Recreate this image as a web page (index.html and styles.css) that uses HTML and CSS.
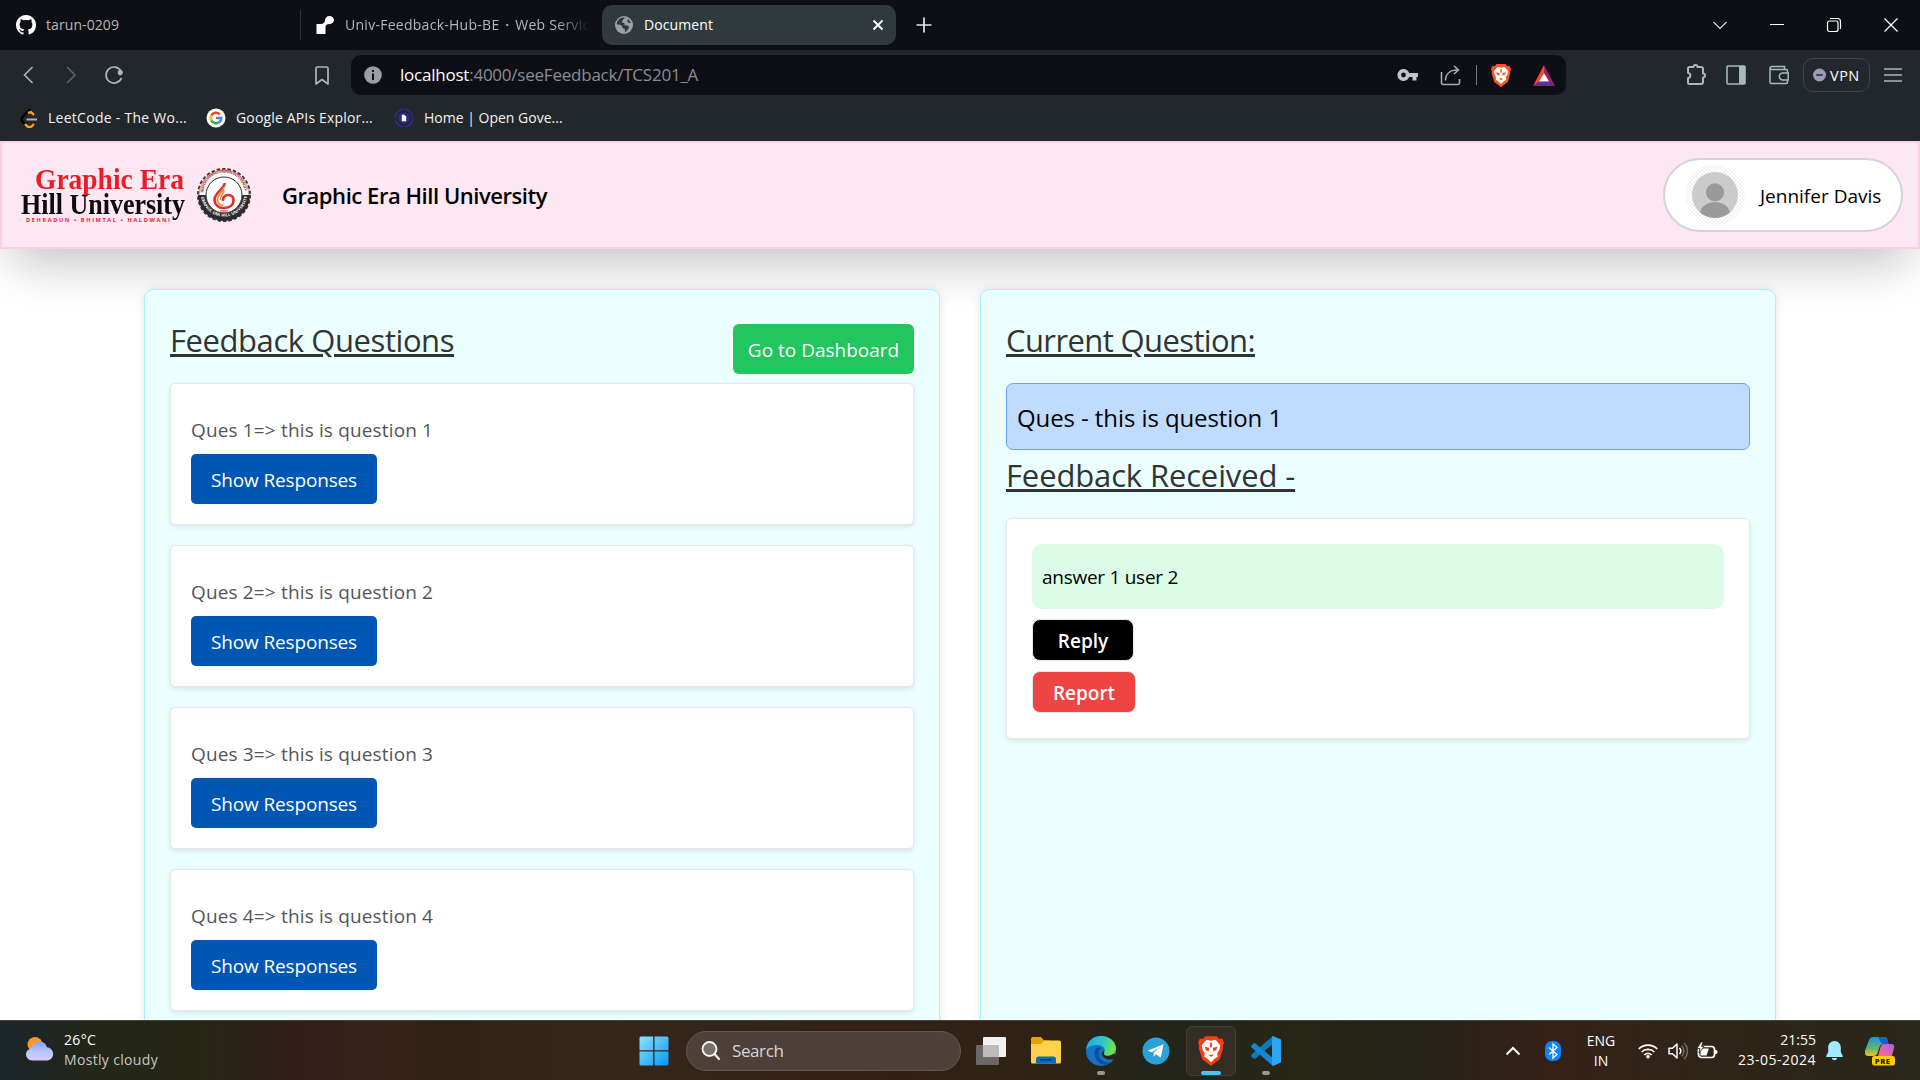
FILE: index.html
```html
<!DOCTYPE html>
<html lang="en">
<head>
<meta charset="utf-8">
<title>Document</title>
<link rel="stylesheet" href="styles.css">
</head>
<body>
<div class="screen">
  <div class="tabbar">
    <div class="tab tab-first">
      <svg class="ico" width="20" height="20" viewBox="0 0 16 16"><path fill="#fff" d="M8 0C3.58 0 0 3.58 0 8c0 3.54 2.29 6.53 5.47 7.59.4.07.55-.17.55-.38v-1.33c-2.23.48-2.7-1.07-2.7-1.07-.36-.92-.89-1.17-.89-1.17-.73-.5.05-.49.05-.49.81.06 1.23.83 1.23.83.72 1.23 1.88.87 2.34.67.07-.52.28-.87.5-1.07-1.77-.2-3.64-.89-3.64-3.95 0-.87.31-1.59.82-2.15-.08-.2-.36-1.02.08-2.12 0 0 .67-.21 2.2.82a7.7 7.7 0 0 1 4 0c1.53-1.04 2.2-.82 2.2-.82.44 1.1.16 1.92.08 2.12.51.56.82 1.27.82 2.15 0 3.07-1.87 3.75-3.65 3.95.29.25.54.73.54 1.48v2.2c0 .21.15.46.55.38A8 8 0 0 0 16 8c0-4.42-3.58-8-8-8z"/></svg>
      <span class="t tab-a">tarun-0209</span>
    </div>
    <div class="tab tab-second">
      <svg class="ico" width="20" height="20" viewBox="0 0 20 20"><path fill="#fff" d="M14.500 1c2.500 0 4.500 1.800 4.500 4s-2 4-4.500 4C12 9 10.500 10 10.500 12v7H1.500V9H6c2.300 0 4-1.500 4-3.500C10 2.800 12 1 14.500 1z"/></svg>
      <span class="t tab-b">Univ-Feedback-Hub-BE<span class="mid">・</span>Web Servic</span>
    </div>
    <div class="tab tab-active">
      <svg class="ico" width="18" height="18" viewBox="0 0 18 18"><circle cx="9" cy="9" r="9" fill="#9aa0a6"/><path fill="#30393e" d="M10 1.600 7.500 4.500l-.3 2.300 2 .3.500 2.200 2.800.2 1.800 1.500-2 3.500-2.500 1.800.2-3-2.200-1.300-1.800-3L1.700 8.200C2 4 5.500 1 10 1.600zM13 3l3 3.800-2.300.2-1.500-2z"/></svg>
      <span class="t tab-c">Document</span>
      <svg class="tab-close" width="12" height="12" viewBox="0 0 12 12"><path d="M1.500 1.500l9 9M10.500 1.500l-9 9" stroke="#fff" stroke-width="1.900"/></svg>
    </div>
    <svg class="newtab" width="16" height="16" viewBox="0 0 16 16"><path d="M8 .5v15M.5 8h15" stroke="#e8e8e8" stroke-width="1.700"/></svg>
    <div class="wincontrols">
      <svg width="16" height="16" viewBox="0 0 16 16"><path d="M1.500 5l6.500 6.500L14.500 5" fill="none" stroke="#ddd" stroke-width="1.200"/></svg>
      <svg width="16" height="16" viewBox="0 0 16 16"><path d="M1 7.500h14" stroke="#fff" stroke-width="1"/></svg>
      <svg width="16" height="16" viewBox="0 0 16 16"><rect x="1.500" y="4" width="10.500" height="10.500" rx="2" fill="none" stroke="#fff" stroke-width="1.200"/><path d="M4 1.500h7.500a3 3 0 0 1 3 3V12" fill="none" stroke="#fff" stroke-width="1.200"/></svg>
      <svg width="16" height="16" viewBox="0 0 16 16"><path d="M1.500 1.500l13 13M14.500 1.500l-13 13" stroke="#fff" stroke-width="1.200"/></svg>
    </div>
  </div>

  <div class="toolbar">
    <div class="nav">
      <svg width="20" height="20" viewBox="0 0 20 20"><path d="M13.500 2L5.500 10l8 8" fill="none" stroke="#a8b8c0" stroke-width="1.600"/></svg>
      <svg width="20" height="20" viewBox="0 0 20 20"><path d="M7 2l8 8-8 8" fill="none" stroke="#59646a" stroke-width="1.600"/></svg>
      <svg width="20" height="20" viewBox="0 0 20 20"><path d="M17 6A8 8 0 1 0 17.500 13" fill="none" stroke="#a8b8c0" stroke-width="1.700"/><path d="M19 7.500a2.600 2.600 0 1 0-1.500 2.500z" fill="#a8b8c0"/></svg>
      <svg class="bookmark" width="14" height="19" viewBox="0 0 14 19"><path d="M1 2.500Q1 1 2.500 1h9Q13 1 13 2.500V18l-6-4.500L1 18z" fill="none" stroke="#a8b8c0" stroke-width="1.700" stroke-linejoin="round"/></svg>
    </div>
    <div class="urlbar">
      <svg width="18" height="18" viewBox="0 0 18 18"><circle cx="9" cy="9" r="8.800" fill="#9b9ea5"/><path d="M8 4h2v2H8zM8 7.500h2V14H8z" fill="#0d0f14"/></svg>
      <span class="t url"><b>localhost</b>:4000/seeFeedback/TCS201_A</span>
      <div class="urlicons">
        <svg class="u1" width="22" height="14" viewBox="0 0 22 14"><path fill="#c3c4c7" fill-rule="evenodd" d="M6.500 1a6 6 0 0 1 5.600 4H21v4h-1.500v3.500h-4V9h-3.400A6 6 0 1 1 6.500 1zm0 3.600a2.400 2.400 0 1 0 0 4.800 2.400 2.400 0 0 0 0-4.800z"/></svg>
        <svg class="u2" width="21" height="21" viewBox="0 0 21 21"><path d="M1.500 7v10.500q0 2 2 2h14q2 0 2-2V14M5.500 15.500c0-6 4-10.500 12-10.500M14 1l4.500 4L14 9" fill="none" stroke="#a9abaf" stroke-width="1.600"/></svg>
        <i class="udiv"></i>
        <svg class="u3" width="20" height="23" viewBox="0 0 28 32"><path fill="#fb542b" d="M8 0h12l3 3 3-.5 2 4.500-1.200 3L27 13l-3.500 12L14 32 4.500 25 1 13l.2-3L0 7l2-4.500 3 .5z"/><path fill="#fff" d="M14 5l5-1 5 6-1 5-2.500 4 1 3-3.500 2-4 4-4-4-3.500-2 1-3L5 15l-1-5 5-6z"/><path fill="#fb542b" d="M7 11.500l5 1-.5 4-3-1.500zM21 11.500l-5 1 .5 4 3-1.500zM11 20h6l-3 2.500zM13 7h2v5h-2z"/></svg>
        <svg class="u4" width="22" height="21" viewBox="0 0 22 21"><path fill="#ff4724" d="M11 0v8L6 17l-6 4z"/><path fill="#9e1f63" d="M11 0l11 21-6-4-5-9z"/><path fill="#662d91" d="M0 21l6-4.500h10l6 4.500z"/><path fill="#fff" d="M11 8l5 8.500H6z"/></svg>
      </div>
    </div>
    <div class="tools">
      <svg width="22" height="22" viewBox="0 0 22 22"><path fill="none" stroke="#a8b8c0" stroke-width="2" stroke-linejoin="round" d="M3 4.500Q3 3 4.500 3h4a2 2 0 0 1 4 0H16q2 0 2 2v4.500a2 2 0 0 1 0 4V18q0 2-2 2H4.500Q3 20 3 18.500v-4.300q2.500-1 2.500-2.700T3 8.800z"/></svg>
      <svg width="20" height="20" viewBox="0 0 20 20"><rect x="1" y="1" width="18" height="18" rx="1" fill="none" stroke="#a8b8c0" stroke-width="1.600"/><path d="M13 1h6v18h-6z" fill="#a8b8c0"/></svg>
      <svg width="20" height="20" viewBox="0 0 20 20"><path fill="none" stroke="#a8b8c0" stroke-width="1.500" d="M18.500 8V6q0-1.500-1.500-1.500H1M1 2.500V17q0 1.500 1.500 1.500H17q1.500 0 1.500-1.500v-2M1 4.500q0-3 2-3h12.500v3M19.200 8h-5.500a3.400 3.400 0 0 0 0 6.900h5.500z"/></svg>
      <div class="vpn"><svg width="13" height="14" viewBox="0 0 14 14"><circle cx="7" cy="7" r="7" fill="#9d9bb8"/><path d="M3.500 7h7" stroke="#22272b" stroke-width="1.600"/></svg><span class="t vpnt">VPN</span></div>
      <svg class="burger" width="18" height="14" viewBox="0 0 18 14"><path d="M0 1h18M0 7h18M0 13h18" stroke="#a8b8c0" stroke-width="1.500"/></svg>
    </div>
  </div>

  <div class="bookmarks">
    <svg width="18" height="20" viewBox="0 0 18 20"><path d="M10.500.8L2.500 9q-2 2.300 0 4.600L5 16" fill="none" stroke="#000" stroke-width="2.500"/><path d="M8 5l3-1 3 3M5 16l2.500 2.500q2 1.200 4 0L14 16" fill="none" stroke="#ffa116" stroke-width="2.400"/><path d="M6.500 11.500H17" stroke="#b3b3b3" stroke-width="2"/></svg>
    <span class="t bm1">LeetCode - The Wo...</span>
    <svg class="b2" width="20" height="20" viewBox="0 0 20 20"><circle cx="10" cy="10" r="9.500" fill="#fff"/><g fill="none" stroke-width="2.600"><path d="M13.700 6.300A5.200 5.200 0 0 0 5.500 7.400" stroke="#ea4335"/><path d="M5.500 7.400a5.200 5.200 0 0 0 0 5.200" stroke="#fbbc05"/><path d="M5.500 12.600a5.200 5.200 0 0 0 7.800 1.500" stroke="#34a853"/><path d="M13.300 14.100A5 5 0 0 0 15.200 10H10" stroke="#4285f4"/></g></svg>
    <span class="t bm2">Google APIs Explor...</span>
    <svg class="b3" width="20" height="20" viewBox="0 0 20 20"><circle cx="10" cy="10" r="8.800" fill="none" stroke="#2f2c9c" stroke-width="1.400" stroke-dasharray="12 1.800"/><circle cx="10" cy="10" r="5.800" fill="#2b298c"/><path d="M7.800 6.800h2.600l1.800 1.800v4.600H7.800z" fill="#fff"/></svg>
    <span class="t bm3">Home | Open Gove...</span>
  </div>

  <div class="page">
    <header class="header">
      <div class="wordmark">
        <span class="t w1">Graphic Era</span>
        <span class="t w2">Hill University</span>
        <span class="t w3">DEHRADUN • BHIMTAL • HALDWANI</span>
      </div>
      <svg class="seal" width="56" height="56" viewBox="0 0 56 56">
        <circle cx="28" cy="28" r="25.500" fill="none" stroke="#3a3839" stroke-width="3" stroke-dasharray="3.400 1.940"/>
        <circle cx="28" cy="28" r="25.300" fill="#fff"/>
        <circle cx="28" cy="28" r="24.800" fill="none" stroke="#6b696a" stroke-width=".6"/>
        <path d="M2 28a26 26 0 0 0 52 0h-8a18 18 0 0 1-36 0z" fill="#2d2b2c"/>
        <circle cx="28" cy="28" r="18" fill="#fff" stroke="#2d2b2c" stroke-width="1"/>
        <path id="arcTop" d="M7.500 26a20.500 20.500 0 0 1 41 0" fill="none"/>
        <path id="arcBottom" d="M5 30a23.300 23.300 0 0 0 46 0" fill="none"/>
        <text class="arc arc-red"><textPath href="#arcTop" textLength="62">TRANSFORMING DREAMS INTO REALITY</textPath></text>
        <text class="arc arc-white"><textPath href="#arcBottom" textLength="66">GRAPHIC ERA HILL UNIVERSITY</textPath></text>
        <path fill="none" stroke="#d8332a" stroke-width="2.600" d="M28.500 16c1 5-10 9-10 17a8.500 8.500 0 0 0 9.500 8c6 0 9.500-3 9.500-8 0-3-2-5-5-5-4 0-6 3-5.500 6"/>
        <path fill="none" stroke="#ef8a3c" stroke-width="1.600" d="M28 20c-1 5-7 8-6.500 13.500.5 3 3 5 6 4.500M28 23c0 4-4 6-3.500 10"/>
        <path d="M24 44h8M26 46h4" stroke="#c9302a" stroke-width="1.200"/>
      </svg>
      <h1 class="t title">Graphic Era Hill University</h1>
      <div class="user">
        <svg width="60" height="60" viewBox="0 0 60 60">
          <defs><pattern id="check" width="4" height="4" patternUnits="userSpaceOnUse"><path d="M0 0h2v2H0zM2 2h2v2H2z" fill="#f2f2f2"/></pattern><clipPath id="face"><circle cx="30" cy="30" r="23"/></clipPath></defs>
          <circle cx="30" cy="30" r="30" fill="url(#check)"/><circle cx="30" cy="30" r="23" fill="#cbcbcb"/>
          <g clip-path="url(#face)" fill="#999"><circle cx="30" cy="27.300" r="9"/><ellipse cx="30" cy="49" rx="15" ry="12"/></g>
        </svg>
        <span class="t uname">Jennifer Davis</span>
      </div>
    </header>

    <main class="columns">
      <section class="panel">
        <div class="panel-head"><h2 class="t h-a">Feedback Questions</h2><button class="dash"><span class="t gd">Go to Dashboard</span></button></div>
        <div class="card"><p class="t q">Ques 1=&gt; this is question 1</p><button class="show"><span class="t sr">Show Responses</span></button></div>
        <div class="card"><p class="t q">Ques 2=&gt; this is question 2</p><button class="show"><span class="t sr">Show Responses</span></button></div>
        <div class="card"><p class="t q">Ques 3=&gt; this is question 3</p><button class="show"><span class="t sr">Show Responses</span></button></div>
        <div class="card"><p class="t q">Ques 4=&gt; this is question 4</p><button class="show"><span class="t sr">Show Responses</span></button></div>
      </section>
      <section class="panel">
        <div class="panel-head"><h2 class="t h-b">Current Question:</h2></div>
        <div class="current"><span class="t cq">Ques - this is question 1</span></div>
        <div class="received"><h2 class="t h-c">Feedback Received -</h2></div>
        <div class="answers">
          <div class="answer"><span class="t an">answer 1 user 2</span></div>
          <button class="act reply"><span class="t rp">Reply</span></button>
          <button class="act report"><span class="t rt">Report</span></button>
        </div>
      </section>
    </main>
  </div>

  <footer class="taskbar">
    <div class="weather">
      <svg width="28" height="24" viewBox="0 0 28 24"><defs><linearGradient id="cl" x1="0" y1="0" x2="0" y2="1"><stop offset="0" stop-color="#7fa8ff"/><stop offset=".55" stop-color="#b9c6fb"/><stop offset="1" stop-color="#dcc8ff"/></linearGradient></defs><circle cx="9" cy="7.500" r="7.500" fill="#fb9a26"/><path fill="url(#cl)" d="M6.500 23.500a6 6 0 0 1-1-12A8 8 0 0 1 21 10.200a6.700 6.700 0 0 1 .5 13.300z"/></svg>
      <div class="wtext"><span class="t temp">26°C</span><span class="t cond">Mostly cloudy</span></div>
    </div>
    <div class="apps">
      <svg width="30" height="30" viewBox="0 0 30 30"><defs><linearGradient id="win" x1="0" y1="0" x2="1" y2="1"><stop offset="0" stop-color="#8be4ff"/><stop offset="1" stop-color="#0795f5"/></linearGradient></defs><path fill="url(#win)" d="M2 .5h12.200v13.700H.5V2Q.5.5 2 .5zM15.500.5H28q1.500 0 1.500 1.500v12.200h-14zM.5 15.500h13.700v14H2q-1.500 0-1.500-1.500zM15.500 15.500h14V28q0 1.500-1.500 1.500H15.500z"/></svg>
      <div class="search"><svg width="20" height="20" viewBox="0 0 20 20"><circle cx="8.500" cy="8" r="7" fill="#77706d" stroke="#f4f4f4" stroke-width="1.900"/><path d="M13.500 13l4.500 5" stroke="#f4f4f4" stroke-width="2.200" stroke-linecap="round"/></svg><span class="t se">Search</span></div>
      <svg class="a1" width="30" height="28" viewBox="0 0 30 28"><rect x="7" y="0" width="23" height="20" rx="1" fill="#f1f1f1"/><rect x="0" y="8" width="23" height="20" rx="1" fill="#6b6867"/><rect x="7" y="8" width="16" height="12" fill="#bdbbbb"/></svg>
      <svg class="a2" width="30" height="27" viewBox="0 0 30 27"><path fill="#e8a200" d="M0 2q0-2 2-2h8l3 3.500h6V9H0z"/><path fill="#ffd04a" d="M0 7h10l3-3.500h15q2 0 2 2V25q0 1.500-1.500 1.500h-27Q0 26.500 0 25z"/><path fill="#0f6cbd" d="M5 26.500V22q0-2.500 2.500-2.500h15Q25 19.500 25 22v4.500z"/><path d="M9 22.800h12" stroke="#083c73" stroke-width="1.500"/></svg>
      <div class="app a3"><svg width="30" height="30" viewBox="0 0 30 30"><defs><linearGradient id="eg" x1="0" y1="0" x2="1" y2=".3"><stop offset="0" stop-color="#23a6e8"/><stop offset=".6" stop-color="#2cc8c9"/><stop offset="1" stop-color="#74e04b"/></linearGradient></defs><circle cx="15" cy="15" r="15" fill="#1473c4"/><path fill="url(#eg)" d="M0 14C1 5 7 0 15 0c9 0 15 6 15 12.500C30 17 26.500 20 22 20c-3 0-5-1.200-4-2.800C20.500 13 17 9 12 9 6 9 1.500 11 0 14z"/><path fill="#0c4fa0" d="M10.500 12C7 15 8 23 13.500 27c3.500 2.500 9 2 13-1-5 1.500-14-1-14-8.500 0-3 1.500-4.500 3.500-5.200-2-.9-4-.9-5.500-.3z"/><path fill="#2a2415" d="M17.500 14.500c-3.500 3-.5 8 4.500 9 2.500.4 5-.3 6.500-1L30 19l-2-1.500c-4 3-10 3-10 .2z"/></svg><i class="dot"></i></div>
      <svg class="a4" width="28" height="28" viewBox="0 0 28 28"><circle cx="14" cy="14" r="13.500" fill="#2aa1da"/><path fill="#fff" d="M5.500 13.700L21.500 7.300 18.800 20.800 14 17.300l-2.500 2.300.3-4L18.500 10l-8.600 5.200z"/></svg>
      <div class="bravebox"><svg width="26" height="30" viewBox="0 0 28 32"><path fill="#fb3d14" d="M8 0h12l3 3 3-.5 2 4.500-1.200 3L27 13l-3.500 12L14 32 4.500 25 1 13l.2-3L0 7l2-4.500 3 .5z"/><path fill="#fff" d="M14 5l5-1 5 6-1 5-2.500 4 1 3-3.500 2-4 4-4-4-3.500-2 1-3L5 15l-1-5 5-6z"/><path fill="#fb3d14" d="M7 11.500l5 1-.5 4-3-1.500zM21 11.500l-5 1 .5 4 3-1.500zM11 20h6l-3 2.500zM13 7h2v5h-2z"/></svg><i class="dot active"></i></div>
      <div class="app a5"><svg width="30" height="30" viewBox="0 0 30 30"><path fill="#0f79c4" d="M22 0v8L4.500 22.500 3 23l-2.700-2.500v-1.700z"/><path fill="#1586d3" d="M22 30v-8L4.500 7.500 3 7 .3 9.500v1.700z"/><path fill="#29a7f2" d="M22 0l8 3.500v23L22 30l-1-1V1z"/></svg><i class="dot"></i></div>
    </div>
    <div class="tray">
      <svg class="t1" width="16" height="10" viewBox="0 0 16 10"><path d="M1.500 8.500L8 2l6.500 6.500" fill="none" stroke="#fff" stroke-width="2"/></svg>
      <svg class="t2" width="16" height="20" viewBox="0 0 16 20"><rect width="16" height="20" rx="7" fill="#0a84ff"/><path d="M4 6.500l8 7L8 17V3l4 3.500-8 7" fill="none" stroke="#fff" stroke-width="1.300"/></svg>
      <div class="lang"><span class="t eng">ENG</span><span class="t in">IN</span></div>
      <svg class="t3" width="20" height="16" viewBox="0 0 20 16"><g fill="none" stroke="#fff" stroke-width="1.700"><path d="M.8 6a13 13 0 0 1 18.400 0M3.600 9a9 9 0 0 1 12.800 0M6.400 12a5 5 0 0 1 7.200 0"/></g><circle cx="10" cy="13.800" r="1.800" fill="#fff"/></svg>
      <svg class="t4" width="20" height="18" viewBox="0 0 20 18"><path d="M1 6.300h3.500L9 2v14l-4.500-4.300H1z" fill="none" stroke="#fff" stroke-width="1.500" stroke-linejoin="round"/><path d="M11.500 6a4.500 4.500 0 0 1 0 6" fill="none" stroke="#fff" stroke-width="1.500"/><path d="M13.700 3.500a8 8 0 0 1 0 11M16 1a11 11 0 0 1 0 16" fill="none" stroke="#777067" stroke-width="1.400"/></svg>
      <svg class="t5" width="21" height="17" viewBox="0 0 21 17"><rect x="1.500" y="4.500" width="16" height="11" rx="3" fill="none" stroke="#fff" stroke-width="1.700"/><path d="M18 8h1q1.500 0 1.500 2T19 12h-1z" fill="#fff"/><path d="M3.500 6.500H12L9.500 13.500h-6z" fill="#fff"/><path d="M4 0L0 6.500h3L2 11l5-6.500H4.500L6 0z" fill="#fff" stroke="#2b2418" stroke-width=".8"/></svg>
      <div class="clock"><span class="t time">21:55</span><span class="t date">23-05-2024</span></div>
      <svg class="t6" width="17" height="20" viewBox="0 0 17 20"><path fill="#9feaff" d="M8.500 0c4 0 6.300 3 6.300 6.500v4.500l2 4q.3 1-.8 1H1q-1.100 0-.8-1l2-4V6.500C2.200 3 4.500 0 8.500 0zM5.700 17h5.600q-.6 2.200-2.800 2.200T5.700 17z"/></svg>
      <svg class="t7" width="30" height="30" viewBox="0 0 30 30"><defs><linearGradient id="c1" x1="0" y1="0" x2="0" y2="1"><stop offset="0" stop-color="#1f8fe8"/><stop offset=".6" stop-color="#5fb86a"/><stop offset="1" stop-color="#f4c21d"/></linearGradient><linearGradient id="c2" x1="1" y1="0" x2="0" y2="1"><stop offset="0" stop-color="#b15cf2"/><stop offset="1" stop-color="#ff6f7a"/></linearGradient></defs><path fill="url(#c1)" d="M8 1h11q3 0 3.500 3l1 4h-5q-3 0-4 3l-2 6q-1 3-4 3H3q-4 0-3-5L4 4q1-3 4-3z"/><path fill="#155fd0" d="M13 1h6q3 0 3.500 3l1 4h-5q-2 0-3-2z"/><path fill="url(#c2)" d="M19 8h7q4 0 3 4l-2 8H13l2.500-9q1-3 3.500-3z"/><rect x="7" y="20" width="23" height="9.500" rx="2.500" fill="#fecb00"/><text x="9.800" y="27.600" class="pre">PRE</text></svg>
    </div>
  </footer>
</div>
</body>
</html>
```
FILE: styles.css
```css
* { box-sizing: border-box; }
body { margin: 0; font-family: "Open Sans", "Noto Sans", sans-serif; }
h1, h2, p { margin: 0; font-weight: 400; }
button { padding: 0; border: 0; font-family: inherit; }
svg { display: block; flex: none; }
.t { white-space: nowrap; }

.screen { width: 1920px; height: 1080px; overflow: hidden; display: flex; flex-direction: column; background: #fff; }

/* Browser tabs */
.tabbar { height: 50px; flex: none; display: flex; align-items: center; background: #0d0f14; font-size: 14px; color: #b5b7ba; }
.tab { display: flex; align-items: center; }
.tabbar .t { padding-bottom: 1px; }
.tab-a { letter-spacing: .08px; }
.tab-b { letter-spacing: .27px; }
.mid { margin: 0 .5px 0 1px; }
.tab-c { letter-spacing: .09px; }
.tab-first { width: 301px; height: 30px; padding-left: 16px; gap: 10px; border-right: 1px solid #32363b; }
.tab-second { width: 287px; padding-left: 14px; gap: 10px; overflow: hidden; -webkit-mask-image: linear-gradient(90deg, #000 255px, transparent 289px); mask-image: linear-gradient(90deg, #000 255px, transparent 289px); }
.tab-active { width: 294px; height: 40px; margin-left: 14px; padding: 0 12px 0 13px; gap: 11px; border-radius: 10px; background: #30393e; color: #fff; }
.tab-close { margin-left: auto; }
.newtab { margin-left: 20px; }
.wincontrols { margin-left: auto; margin-right: 21px; display: flex; gap: 41px; }

/* Address bar */
.toolbar { height: 50px; flex: none; display: flex; align-items: center; background: #22272b; }
.nav { width: 351px; padding-left: 19px; display: flex; align-items: center; }
.nav svg:nth-child(2) { margin-left: 21px; }
.nav svg:nth-child(3) { margin-left: 24px; }
.nav .bookmark { margin-left: 191px; }
.urlbar { width: 1215px; height: 40px; padding-left: 13px; display: flex; align-items: center; border-radius: 10px; background: #0d0f14; }
.url { margin-left: 18px; padding-bottom: 1px; font-size: 17px; letter-spacing: -.23px; color: #8b8e92; }
.url b { font-weight: 400; color: #fff; }
.urlicons { margin-left: auto; display: flex; align-items: center; padding-right: 11px; }
.u2 { margin-left: 21px; }
.udiv { width: 1px; height: 20px; margin-left: 15px; background: #75787c; }
.u3 { margin-left: 14px; }
.u4 { margin-left: 22px; }
.tools { flex: 1; padding: 0 18px 0 119px; display: flex; align-items: center; }
.tools > svg:nth-child(2) { margin-left: 19px; }
.tools > svg:nth-child(3) { margin-left: 23px; }
.vpn { width: 67px; height: 34px; margin-left: 14px; padding-left: 9px; display: flex; align-items: center; gap: 4px; border: 1px solid #3b464b; border-radius: 10px; color: #fff; font-size: 14.500px; letter-spacing: .5px; }
.burger { margin-left: auto; }

.bookmarks { height: 41px; flex: none; padding: 0 0 5px 20px; display: flex; align-items: center; background: #22272b; color: #f3f3f3; font-size: 14px; }
.bookmarks .t { width: 140px; margin-left: 10px; padding-bottom: 1px; }
.bm1 { letter-spacing: .27px; }
.bm2 { letter-spacing: .16px; }
.bookmarks .b2 { margin-left: 18px; }
.bookmarks .b3 { margin-left: 18px; }

/* Site header */
.page { flex: 1; min-height: 0; overflow: hidden; }
.header { height: 108px; padding: 0 15px 0 19px; display: flex; align-items: center; border: 2px solid #fbcfe8; background: #fce7f3; box-shadow: 0 25px 50px -12px rgba(0, 0, 0, .25); }
.wordmark { width: 175px; padding-top: 1px; display: flex; flex-direction: column; align-items: flex-start; font-family: "Liberation Serif", serif; font-weight: 700; line-height: 25px; }
.w1 { margin-left: 14px; font-size: 29px; color: #ed1c24; transform: scaleX(.948); transform-origin: left; }
.w2 { font-size: 29px; color: #0a0a0a; transform: scaleX(.897); transform-origin: left; }
.w3 { margin-left: 5px; font-family: "Open Sans", sans-serif; font-size: 5.600px; line-height: 7px; letter-spacing: 1.620px; color: #ed1c24; }
.arc { font: 700 4px "Open Sans", sans-serif; }
.arc-red { fill: #c9302a; }
.arc-white { fill: #fff; }
.title { margin-left: 30px; font-size: 22px; font-weight: 600; letter-spacing: -.45px; color: #000; }
.user { width: 240px; height: 74px; margin-left: auto; padding-left: 20px; display: flex; align-items: center; gap: 15px; border: 2px solid #d1d5db; border-radius: 37px; background: #fff; font-size: 19px; color: #000; }
.uname, .gd, .sr, .cq, .an, .rp, .rt { padding-top: 1px; }
.gd, .sr, .rp, .rt { display: inline-block; }

/* Feedback panels */
.columns { height: 900px; margin-top: 40px; padding: 0 144px; display: grid; grid-template-columns: 1fr 1fr; gap: 40px; }
.panel { padding: 25px; border: 1px solid #a5f3fc; border-radius: 10px; background: #ebffff; box-shadow: 0 0 10px rgba(0, 0, 0, .1); }
.panel-head { height: 68px; display: flex; justify-content: space-between; }
h2 { font-size: 31px; line-height: 50px; color: #333; text-decoration: underline; text-decoration-thickness: 3px; text-underline-offset: 2px; }
.h-a { letter-spacing: -.43px; }
.h-b { letter-spacing: -.61px; }
.h-c { letter-spacing: -.14px; }
.dash { width: 181px; height: 50px; margin-top: 9px; border-radius: 6px; background: #22c55e; color: #fff; font-size: 19px; }
.card { height: 142px; margin-bottom: 20px; padding: 33px 20px 0; border: 1px solid #e5e7eb; border-radius: 5px; background: #fff; box-shadow: 0 2px 5px rgba(0, 0, 0, .1); }
.q { font-size: 19px; line-height: 27px; letter-spacing: .15px; color: #555; }
.show { width: 186px; height: 50px; margin-top: 10px; border-radius: 5px; background: #0056b3; color: #fff; font-size: 19px; }
.sr { letter-spacing: -.15px; }
.current { height: 67px; padding-left: 10px; display: flex; align-items: center; border: 1px solid #60a5fa; border-radius: 7px; background: #bfdbfe; font-size: 24px; color: #000; }
.cq { letter-spacing: -.09px; }
.received { height: 68px; }
.answers { height: 221px; padding: 25px; border: 1px solid #e5e7eb; border-radius: 5px; background: #fff; box-shadow: 0 2px 5px rgba(0, 0, 0, .1); }
.answer { height: 65px; padding-left: 10px; display: flex; align-items: center; border-radius: 10px; background: #dcfce7; font-size: 19px; letter-spacing: -.27px; color: #000; }
.act { display: block; height: 42px; margin-top: 10px; border: 1px solid #e5e7eb; border-radius: 8px; color: #fff; font-size: 19px; font-weight: 600; }
.reply { width: 102px; background: #000; }
.report { width: 104px; background: #ef4444; }

/* Taskbar */
.taskbar { height: 60px; flex: none; display: flex; align-items: center; border-top: 1px solid #45423a; background: linear-gradient(90deg, #1b252a 0, #232618 90px, #262616 200px, #321e1b 300px, #38201a 360px, #322216 440px, #35251a 620px, #332015 900px, #2e2315 1060px, #22251b 1160px, #272616 1280px, #262319 1420px, #352118 1550px, #2f2418 1700px, #29261a 1920px); color: #fff; }
.weather { width: 639px; padding-left: 26px; display: flex; align-items: center; gap: 10px; }
.weather svg { margin-bottom: 3px; }
.wtext { padding-bottom: 2px; display: flex; flex-direction: column; font-size: 14px; line-height: 20px; letter-spacing: .33px; }
.cond { color: #c9c7c3; }
.apps { width: 642px; height: 59px; display: flex; align-items: center; }
.search { width: 275px; height: 40px; margin-left: 17px; padding-left: 14px; display: flex; align-items: center; gap: 11px; border: 1px solid #635750; border-radius: 20px; background: #4d4039; color: #d9d6d4; font-size: 17px; letter-spacing: -.4px; }
.a1 { margin-left: 15px; }
.a2 { margin-left: 25px; }
.app, .bravebox { position: relative; height: 50px; display: flex; align-items: center; justify-content: center; }
.a3 { width: 30px; margin-left: 25px; }
.a4 { margin-left: 26px; }
.bravebox { width: 50px; margin-left: 16px; border: 1px solid #443d35; border-radius: 6px; background: #332d26; }
.a5 { width: 30px; margin-left: 15px; }
.dot { position: absolute; bottom: 1px; left: 50%; width: 8px; height: 4px; margin-left: -4px; border-radius: 2px; background: #9b968f; }
.dot.active { bottom: 0; width: 20px; margin-left: -10px; background: #4cc2ff; }
.tray { flex: 1; display: flex; align-items: center; font-size: 14px; line-height: 20px; }
.t1 { margin-left: 224px; }
.t2 { margin-left: 24px; }
.lang { width: 40px; margin-left: 20px; display: flex; flex-direction: column; align-items: center; }
.t3 { margin-left: 17px; }
.t4 { margin-left: 10px; }
.t5 { margin-left: 9px; }
.clock { width: 98px; padding-bottom: 2px; display: flex; flex-direction: column; align-items: flex-end; }
.date { letter-spacing: .49px; }
.t6 { margin-left: 10px; }
.t7 { margin-left: 22px; }
.pre { font: 800 7.500px "Open Sans", sans-serif; fill: #1c1c1c; letter-spacing: .6px; }
```
